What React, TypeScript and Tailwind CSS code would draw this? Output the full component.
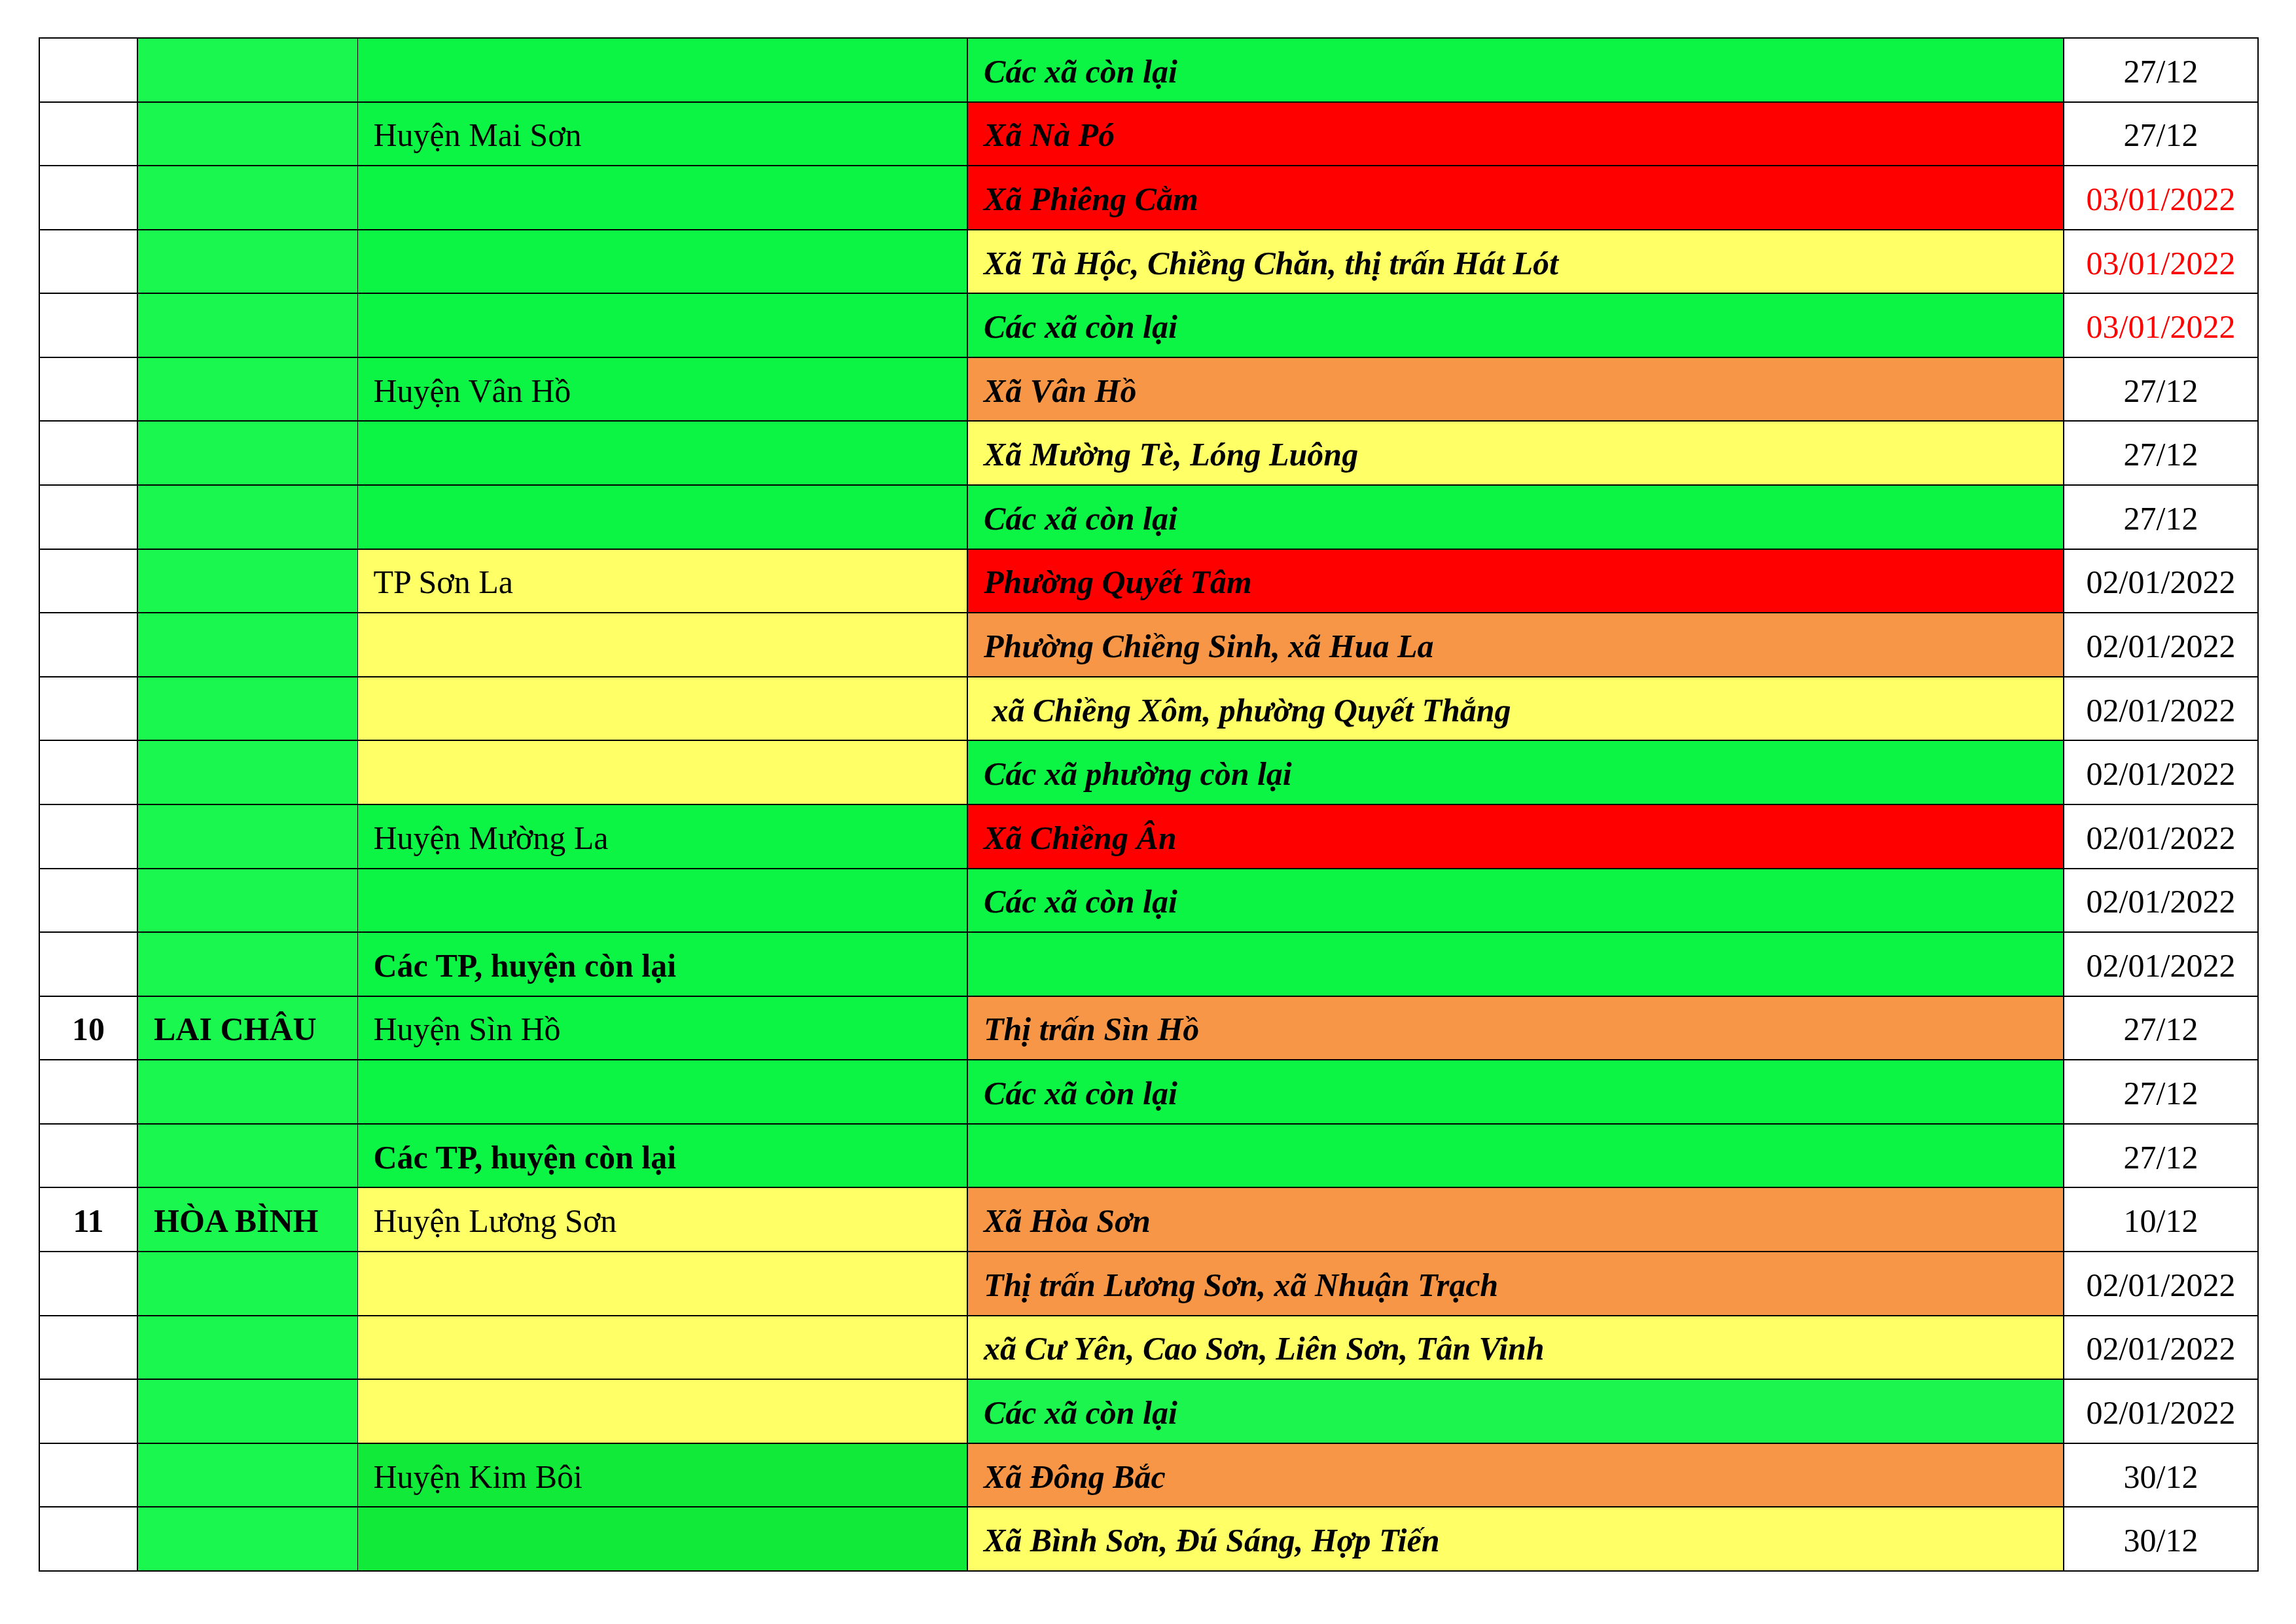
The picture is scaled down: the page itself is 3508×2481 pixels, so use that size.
import React from "react";

type Row = {
  n?: string;
  prov?: string;
  dist?: string;
  distBold?: boolean;
  distBg: string;
  ward?: string;
  wardBg: string;
  date: string;
  dateRed?: boolean;
};

const G = "bg-[#0cf545]";
const LG = "bg-[#1df54f]";
const DG = "bg-[#12ea3a]";
const R = "bg-[#ff0000]";
const Y = "bg-[#ffff66]";
const O = "bg-[#f79646]";

const rows: Row[] = [
  { distBg: G, ward: "Các xã còn lại", wardBg: G, date: "27/12" },
  { dist: "Huyện Mai Sơn", distBg: G, ward: "Xã Nà Pó", wardBg: R, date: "27/12" },
  { distBg: G, ward: "Xã Phiêng Cằm", wardBg: R, date: "03/01/2022", dateRed: true },
  { distBg: G, ward: "Xã Tà Hộc, Chiềng Chăn, thị trấn Hát Lót", wardBg: Y, date: "03/01/2022", dateRed: true },
  { distBg: G, ward: "Các xã còn lại", wardBg: G, date: "03/01/2022", dateRed: true },
  { dist: "Huyện Vân Hồ", distBg: G, ward: "Xã Vân Hồ", wardBg: O, date: "27/12" },
  { distBg: G, ward: "Xã Mường Tè, Lóng Luông", wardBg: Y, date: "27/12" },
  { distBg: G, ward: "Các xã còn lại", wardBg: G, date: "27/12" },
  { dist: "TP Sơn La", distBg: Y, ward: "Phường Quyết Tâm", wardBg: R, date: "02/01/2022" },
  { distBg: Y, ward: "Phường Chiềng Sinh, xã Hua La", wardBg: O, date: "02/01/2022" },
  { distBg: Y, ward: "\u00a0xã Chiềng Xôm, phường Quyết Thắng", wardBg: Y, date: "02/01/2022" },
  { distBg: Y, ward: "Các xã phường còn lại", wardBg: G, date: "02/01/2022" },
  { dist: "Huyện Mường La", distBg: G, ward: "Xã Chiềng Ân", wardBg: R, date: "02/01/2022" },
  { distBg: G, ward: "Các xã còn lại", wardBg: G, date: "02/01/2022" },
  { dist: "Các TP, huyện còn lại", distBold: true, distBg: G, wardBg: G, date: "02/01/2022" },
  { n: "10", prov: "LAI CHÂU", dist: "Huyện Sìn Hồ", distBg: G, ward: "Thị trấn Sìn Hồ", wardBg: O, date: "27/12" },
  { distBg: G, ward: "Các xã còn lại", wardBg: G, date: "27/12" },
  { dist: "Các TP, huyện còn lại", distBold: true, distBg: G, wardBg: G, date: "27/12" },
  { n: "11", prov: "HÒA BÌNH", dist: "Huyện Lương Sơn", distBg: Y, ward: "Xã Hòa Sơn", wardBg: O, date: "10/12" },
  { distBg: Y, ward: "Thị trấn Lương Sơn, xã Nhuận Trạch", wardBg: O, date: "02/01/2022" },
  { distBg: Y, ward: "xã Cư Yên, Cao Sơn, Liên Sơn, Tân Vinh", wardBg: Y, date: "02/01/2022" },
  { distBg: Y, ward: "Các xã còn lại", wardBg: LG, date: "02/01/2022" },
  { dist: "Huyện Kim Bôi", distBg: DG, ward: "Xã Đông Bắc", wardBg: O, date: "30/12" },
  { distBg: DG, ward: "Xã Bình Sơn, Đú Sáng, Hợp Tiến", wardBg: Y, date: "30/12" },
];

export default function App() {
  return (
    <div className="w-[3508px] h-[2481px] bg-white pt-[57px] pl-[59px] font-['Liberation_Serif','Times_New_Roman',serif] text-black">
      <table className="table-fixed border-collapse w-[3390px] text-[50px] leading-none">
        <colgroup>
          <col className="w-[150px]" />
          <col className="w-[336px]" />
          <col className="w-[932px]" />
          <col className="w-[1675px]" />
          <col className="w-[297px]" />
        </colgroup>
        <tbody>
          {rows.map((r, i) => (
            <tr key={i} className="h-[97.58px]">
              <td className="border-2 border-black bg-white pt-[4px] text-center font-bold align-middle">
                {r.n ?? ""}
              </td>
              <td className="border-2 border-r border-black bg-[#1af74e] pl-[24px] pt-[4px] font-bold align-middle whitespace-nowrap">
                {r.prov ?? ""}
              </td>
              <td className={`border-2 border-l border-black ${r.distBg} pl-[24px] pt-[4px] align-middle whitespace-nowrap ${r.distBold ? "font-bold" : ""}`}>
                {r.dist ?? ""}
              </td>
              <td className={`border-2 border-black ${r.wardBg} pl-[24px] pt-[4px] font-bold italic align-middle whitespace-pre`}>
                {r.ward ?? ""}
              </td>
              <td className={`border-2 border-black bg-white pt-[4px] text-center align-middle ${r.dateRed ? "text-[#ff0000]" : "text-black"}`}>
                {r.date}
              </td>
            </tr>
          ))}
        </tbody>
      </table>
    </div>
  );
}
